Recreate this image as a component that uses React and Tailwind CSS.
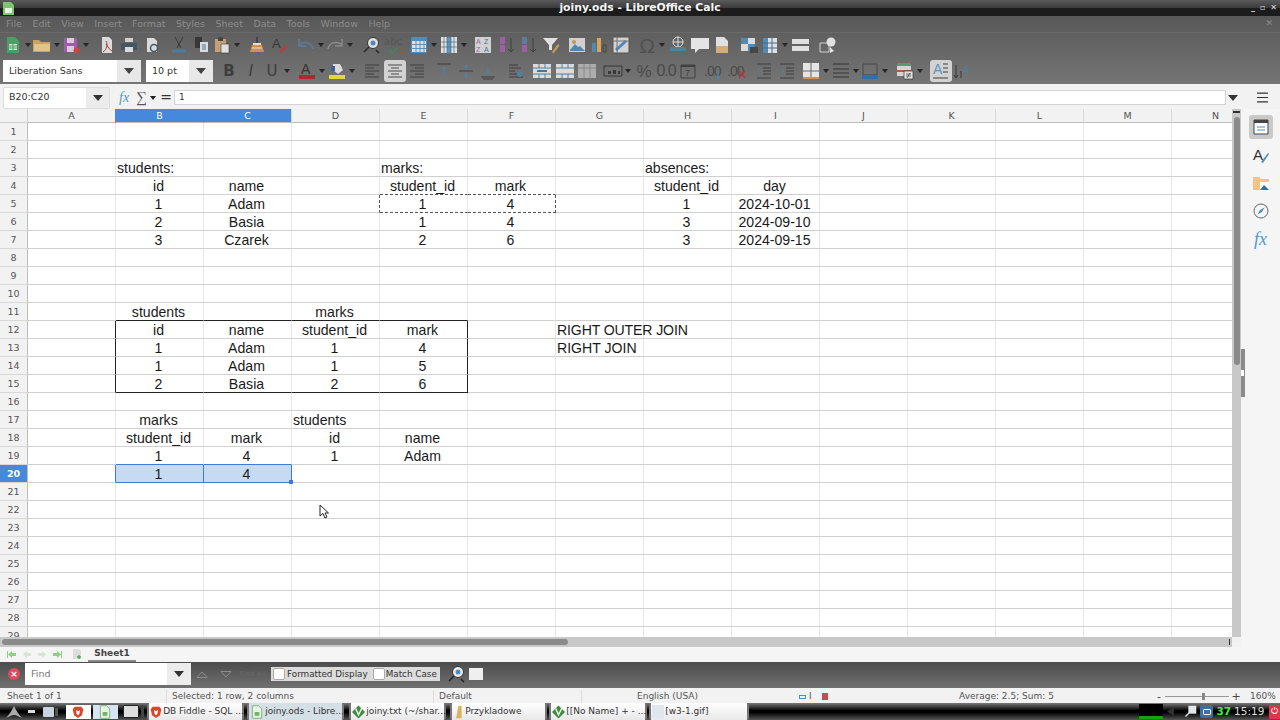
import { Menu as MenuIcon } from "lucide-react";

const colNames = ["A", "B", "C", "D", "E", "F", "G", "H", "I", "J", "K", "L", "M", "N"];
const rowNums = Array.from({ length: 29 }, (_, i) => i + 1);
const menus = ["File", "Edit", "View", "Insert", "Format", "Styles", "Sheet", "Data", "Tools", "Window", "Help"];

// cell contents, left = label overflowing to the right
const cells = {
  B3: { t: "students:", left: true }, E3: { t: "marks:", left: true }, H3: { t: "absences:", left: true },
  B4: { t: "id" }, C4: { t: "name" }, E4: { t: "student_id" }, F4: { t: "mark" }, H4: { t: "student_id" }, I4: { t: "day" },
  B5: { t: "1" }, C5: { t: "Adam" }, E5: { t: "1" }, F5: { t: "4" }, H5: { t: "1" }, I5: { t: "2024-10-01" },
  B6: { t: "2" }, C6: { t: "Basia" }, E6: { t: "1" }, F6: { t: "4" }, H6: { t: "3" }, I6: { t: "2024-09-10" },
  B7: { t: "3" }, C7: { t: "Czarek" }, E7: { t: "2" }, F7: { t: "6" }, H7: { t: "3" }, I7: { t: "2024-09-15" },
  B11: { t: "students" }, D11: { t: "marks" },
  B12: { t: "id" }, C12: { t: "name" }, D12: { t: "student_id" }, E12: { t: "mark" }, G12: { t: "RIGHT OUTER JOIN", left: true },
  B13: { t: "1" }, C13: { t: "Adam" }, D13: { t: "1" }, E13: { t: "4" }, G13: { t: "RIGHT JOIN", left: true },
  B14: { t: "1" }, C14: { t: "Adam" }, D14: { t: "1" }, E14: { t: "5" },
  B15: { t: "2" }, C15: { t: "Basia" }, D15: { t: "2" }, E15: { t: "6" },
  B17: { t: "marks" }, D17: { t: "students", left: true },
  B18: { t: "student_id" }, C18: { t: "mark" }, D18: { t: "id" }, E18: { t: "name" },
  B19: { t: "1" }, C19: { t: "4" }, D19: { t: "1" }, E19: { t: "Adam" },
  B20: { t: "1" }, C20: { t: "4" },
};

// borders and fills that differ from the plain grid
const extra = {
  E4: "!border-b-[#555] [border-bottom-style:dashed]",
  F4: "!border-b-[#555] [border-bottom-style:dashed]",
  D5: "!border-r-[#555] [border-right-style:dashed]",
  E5: "!border-b-[#555] [border-bottom-style:dashed]",
  F5: "!border-r-[#555] !border-b-[#555] border-dashed",
  B11: "!border-b-[#222]", C11: "!border-b-[#222]", D11: "!border-b-[#222]", E11: "!border-b-[#222]",
  G12: "tracking-[-0.13px]",
  A12: "!border-r-[#222]", A13: "!border-r-[#222]", A14: "!border-r-[#222]", A15: "!border-r-[#222]",
  E12: "!border-r-[#222]", E13: "!border-r-[#222]", E14: "!border-r-[#222]", E15: "!border-r-[#222] !border-b-[#222]",
  B15: "!border-b-[#222]", C15: "!border-b-[#222]", D15: "!border-b-[#222]",
  B19: "!border-b-[#3f7ccb]", C19: "!border-b-[#3f7ccb]", A20: "!border-r-[#3f7ccb]",
  B20: "bg-[#c6daf4] !border-r-[#3f7ccb] !border-b-[#3f7ccb]",
  C20: "bg-[#c6daf4] !border-r-[#3f7ccb] !border-b-[#3f7ccb]",
};

const S = ({ children, w = 18, h = 18, box = "0 0 18 18" }) => (
  <svg width={w} height={h} viewBox={box} fill="none" className="shrink-0">{children}</svg>
);

const I = ({ children, className = "" }) => (
  <div className={`flex h-[22px] w-[22px] shrink-0 items-center justify-center ${className}`}>{children}</div>
);

const Ar = ({ className = "" }) => (
  <div className={`flex w-[7px] shrink-0 justify-center ${className}`}>
    <svg width="6" height="4" viewBox="0 0 6 4"><path d="M0 0h6L3 4z" fill="#1f1f1f" /></svg>
  </div>
);

const ComboArrow = () => <svg width="10" height="6" viewBox="0 0 10 6"><path d="M0 0h10L5 6z" fill="#333" /></svg>;

const NewDoc = () => <S><path d="M3 1h8l4 4v12H3z" fill="#4aa564" /><path d="M5 8h8v6H5z" fill="#e8f3ea" /><path d="M5 10h8M5 12h8M9 8v6" stroke="#4aa564" /></S>;
const Folder = () => <S w={20} box="0 0 20 18"><path d="M1 4h6l2 2h9v10H1z" fill="#d8a85f" /><path d="M2 8h16v7H2z" fill="#f0cf8f" /></S>;
const Save = () => <S><path d="M2 2h13v14H2z" fill="#a55fae" /><path d="M5 2h7v5H5zM5 10h7v6H5z" fill="#e9d4ea" /><circle cx="14.5" cy="14.5" r="3" fill="#d8433f" /></S>;
const Pdf = () => <S><path d="M4 1h7l3 3v13H4z" fill="#e8e8e8" /><path d="M8 5c2 4 1 8-3 11M8 8c2 3 4 6 6 7" stroke="#a33" /></S>;
const Printer = () => <S><path d="M5 2h8v4H5z" fill="#ddd" /><path d="M1 7h16v7H1z" fill="#3f5663" /><path d="M5 11h8v5H5z" fill="#e8e8e8" /></S>;
const Preview = () => <S><path d="M4 2h7l3 3v11H4z" fill="#e8e8e8" /><circle cx="11" cy="12" r="3.5" stroke="#456" strokeWidth="1.5" /></S>;
const Cut = () => <S><path d="M5 1l6 11M13 1L7 12" stroke="#333" /><path d="M2 15h14" stroke="#4b7fa5" strokeWidth="3" /></S>;
const Copy = () => <S><path d="M3 1h7v11H3z" fill="#333" /><path d="M8 6h8v10H8z" fill="#e8e8e8" /><path d="M10 9h4M10 11h4M10 13h4" stroke="#4b7fa5" /></S>;
const Paste = () => <S><path d="M2 3h11v13H2z" fill="#cfa877" /><path d="M5 1h5v4H5z" fill="#444" /><path d="M8 8h8v9H8z" fill="#eee" stroke="#333" strokeWidth=".6" /></S>;
const Clone = () => <S><path d="M8 1h2v6H8z" fill="#444" /><path d="M5 7h8v2H5z" fill="#eee" /><path d="M4 9h10l2 7H2z" fill="#d9974e" /><path d="M4 12h10" stroke="#eee" /></S>;
const Clear = () => <S><text x="2" y="12" fontSize="13" fill="#333" fontFamily="Liberation Sans">A</text><path d="M9 15l6-6 2 2-6 6z" fill="#c23a3a" /></S>;
const Undo = () => <S><path d="M16 13C15 7 9 5 3 8" stroke="#5b7c99" strokeWidth="2" /><path d="M2 3v7h7" stroke="#5b7c99" strokeWidth="2" /></S>;
const Redo = () => <S><path d="M2 13C3 7 9 5 15 8" stroke="#909090" strokeWidth="1.5" /><path d="M16 3v7H9" stroke="#909090" strokeWidth="1.5" /></S>;
const Find = () => <S><circle cx="11" cy="7" r="5.5" fill="#eee" stroke="#333" /><circle cx="11" cy="7" r="2.5" fill="#4b8ec4" /><path d="M7 11l-5 5M14 14l3 3" stroke="#222" strokeWidth="1.5" /></S>;
const Spell = () => <S w={20} box="0 0 20 18"><text x="1" y="9" fontSize="10" fill="#555" fontFamily="DejaVu Sans">abc</text><path d="M6 14l3 3 6-5" stroke="#3f8a5a" strokeWidth="1.5" /></S>;
const Table = () => <S><path d="M1 1h16v16H1z" fill="#4f8fc0" /><path d="M2 5h14v11H2z" fill="#eee" /><path d="M6 1v16M10 1v16M14 1v16M1 8.500h16M1 12.500h16" stroke="#6a94b4" /></S>;
const Grid2 = () => <S><path d="M1 1h16v16H1z" fill="#eee" /><path d="M7 1h4v16H7z" fill="#5b9bcc" /><path d="M1 6h16M1 11h16M4 1v16M7 1v16M11 1v16M14 1v16" stroke="#4a6f8a" strokeWidth=".7" /></S>;
const SortAZ = () => <S><path d="M1 1h16v16H1z" fill="#ddd" /><text x="2" y="8" fontSize="7" fill="#a55fae" fontFamily="Liberation Sans">A</text><text x="10" y="8" fontSize="7" fill="#3f78a5" fontFamily="Liberation Sans">Z</text><text x="2" y="16" fontSize="7" fill="#a55fae" fontFamily="Liberation Sans">Z</text><text x="10" y="16" fontSize="7" fill="#3f78a5" fontFamily="Liberation Sans">A</text></S>;
const SortDir = ({ a, b }) => <S><path d={"M3 1h5v7H3z"} fill={a} /><path d="M3 9h5v7H3z" fill={b} /><path d="M14 2v14M11 13l3 3 3-3" stroke="#3a3a3a" /></S>;
const Filter = () => <S><path d="M1 2h15L10 9v5H7V9z" fill="#eee" /><path d="M10 16l6-8 1.500 1.500-6 8z" fill="#d9a14e" /></S>;
const Picture = () => <S><path d="M1 2h16v14H1z" fill="#ddd" /><path d="M2 14l5-6 3 3 2-1 5 5H2z" fill="#4d8cc0" /><circle cx="6" cy="6" r="2" fill="#d9974e" /></S>;
const Chart = () => <S><path d="M2 7h4v9H2z" fill="#4d8cc0" /><path d="M7 2h4v14H7z" fill="#e6ac50" /><path d="M13 9h3v7h-3z" stroke="#444" /></S>;
const Pivot = () => <S><path d="M1 1h16v16H1z" fill="#ddd" stroke="#555" /><path d="M4 14L14 5" stroke="#4d8cc0" strokeWidth="3" /><path d="M1 5h16M5 1v16" stroke="#777" /></S>;
const Omega = () => <span className="font-['Liberation_Sans',sans-serif] text-[21px] leading-none text-[#505050]">Ω</span>;
const LinkIcon = () => <S><circle cx="9" cy="6" r="5" stroke="#eee" /><path d="M4 6h10M9 1v10" stroke="#eee" /><path d="M1 11h16v4H1z" fill="#4f83a5" /></S>;
const Comment = () => <S w={20} box="0 0 20 18"><path d="M1 2h18v11H9l-4 4v-4H1z" fill="#f2f2f2" /></S>;
const Note = () => <S><path d="M3 1h8l4 4v12H3z" fill="#eee" /><path d="M3 10h12v7H3z" fill="#e0b478" /></S>;
const Header = () => <S w={20} box="0 0 20 18"><path d="M2 2h14v13H2z" fill="#e8e8e8" /><path d="M2 2h7v6H2zM9 8h7v7H9z" fill="#4f8fc0" /><path d="M11 11h8v6h-8z" fill="#444" /></S>;
const Col = () => <S><path d="M2 2h14v15H2z" fill="#eee" /><path d="M2 2h5v15H2z" fill="#4f8fc0" /><path d="M2 7h14M2 12h14M11 2v15" stroke="#3f6f95" /></S>;
const Split = () => <S w={20} box="0 0 20 18"><path d="M1 3h17v5H1zM1 10h17v5H1z" fill="#eee" /></S>;
const Shapes = () => <S w={20} box="0 0 20 18"><path d="M2 7h9v9H2z" stroke="#ddd" /><circle cx="13" cy="6" r="4.500" fill="#eee" /><path d="M12 11l4 4-4 2z" fill="#eee" /></S>;

const Letter = ({ c, cls }) => <span className={`font-['DejaVu_Sans',sans-serif] text-[15px] leading-none text-[#3d3d3d] ${cls}`}>{c}</span>;
const FontColor = () => <S box="0 0 18 18"><text x="3" y="12" fontSize="14" fill="#2e2e2e" fontFamily="Liberation Sans">A</text><path d="M1 13h16v4H1z" fill="#b8202c" /></S>;
const Highlight = () => <S><path d="M5 2l7 0 3 6-5 4-5-4z" fill="#e8e8e8" /><path d="M3 4h4v5H3z" fill="#2f66a8" /><path d="M1 13h16v4H1z" fill="#efe23a" /></S>;
const Lines = ({ ds }) => <S>{ds.map((d, i) => <path key={i} d={d} stroke="#3d3d3d" />)}</S>;
const VAlign = ({ y }) => <S><path d={y === 0 ? "M2 2h14" : y === 1 ? "M2 9h14" : "M2 15h14"} stroke="#3a3a3a" /><path d={y === 0 ? "M7 5h4l-2 5z" : y === 1 ? "M7 3h4L9 8zM7 15h4l-2-5z" : "M7 12h4L9 6z"} fill="#4f83a5" /><path d={y === 2 ? "M4 17h10" : "M9 10v5"} stroke={y === 2 ? "#3a3a3a" : "#4f83a5"} /></S>;
const WrapBars = () => <S><path d="M2 3h9M2 6h12M2 9h6M2 12h9M2 15h14" stroke="#3a3a3a" /><circle cx="13" cy="12" r="3" fill="#4f83a5" /></S>;
const Merge = ({ mid }) => <S w={20} box="0 0 20 18"><path d="M1 2h18v14H1z" fill="#e8e8e8" /><path d="M1 6h18M1 12h18M7 2v4M13 2v4M7 12v4M13 12v4" stroke="#4f83a5" /><path d={mid ? "M5 9h10" : "M1 9h0"} stroke="#3f78a5" strokeWidth="2" /></S>;
const MergeOff = () => <S w={20} box="0 0 20 18"><path d="M1 2h18v14H1z" fill="#b5b5b5" /><path d="M1 6h18M7 2v14M13 2v14" stroke="#8a8a8a" /></S>;
const Fmt = () => <S w={20} box="0 0 20 18"><path d="M1 4h18v10H1z" stroke="#333" /><path d="M5 9h3v3H5zM10 8h3v4h-3zM15 9h2v3h-2z" fill="#333" /></S>;
const DateI = () => <S><path d="M2 3h14v13H2z" stroke="#3d3d3d" /><path d="M2 3h14v2H2z" fill="#3d3d3d" /><text x="6" y="14" fontSize="9" fill="#3d3d3d" fontFamily="Liberation Sans">7</text></S>;
const DecAdd = ({ red }) => (
  <S w={22} box="0 0 22 18">
    <text x="1" y="14" fontSize="14" fill="#474747" fontFamily="Liberation Sans" letterSpacing="-1">.00</text>
    {red
      ? <path d="M13 9l6 7M19 9l-6 7" stroke="#b8303a" strokeWidth="1.5" />
      : <path d="M15 9v7M13 14l2 2 2-2" stroke="#4f83a5" strokeWidth="1.5" />}
  </S>
);
const Indent = () => <S><path d="M2 2h14M8 6h8M8 9h8M8 12h8M2 16h14" stroke="#3a3a3a" /><path d="M2 9h4M4 7l2 2-2 2" stroke="#4f83a5" /></S>;
const Borders = () => <S><path d="M1 1h16v16H1z" fill="#f2f2f2" /><path d="M9 1v16M1 9h16" stroke="#666" /><path d="M1 16h16" stroke="#d9974e" strokeWidth="2" /></S>;
const BorderStyle = () => <S><path d="M1 2h16M1 7h16M1 11h16M1 15h16" stroke="#2e2e2e" /></S>;
const BorderColor = () => <S><path d="M2 2h14v11H2z" stroke="#444" /><path d="M1 13h16v4H1z" fill="#2a6fb0" /></S>;
const Cond = () => <S><path d="M1 1h14v13H1z" fill="#e0e0e0" /><path d="M1 1h14v3H1z" fill="#4aa564" /><path d="M1 8h14v2H1z" fill="#c0574f" /><path d="M8 9h9v8H8z" fill="#eee" stroke="#333" strokeWidth=".7" /><path d="M10 12h5M10 14h5M11 16l3-5" stroke="#333" strokeWidth=".7" /></S>;
const WrapA = () => <S><text x="1" y="12" fontSize="14" fill="#4f8fc0" fontFamily="Liberation Sans">A</text><path d="M11 2h5M11 6h5M11 10h5M1 16h15" stroke="#333" /></S>;
const VertText = () => <S><path d="M3 3v13M1 13l2 3 2-3M8 9v7" stroke="#333" /><text x="9" y="12" fontSize="11" fill="#4f83a5" fontFamily="Liberation Sans">A</text></S>;

const Deck = ({ children, active }) => (
  <div className={`flex h-[24px] w-[24px] items-center justify-center rounded-[3px] ${active ? "bg-[#c9c9c9]" : ""}`}>{children}</div>
);

const Task = ({ icon, text, active, className = "" }) => (
  <div className={`flex h-[17px] shrink-0 items-center gap-[1px] whitespace-nowrap rounded-[2px] border-x-2 border-[#777] px-[1px] text-[9px] text-[#333] ${active ? "bg-[#d4dfe6]" : "bg-gradient-to-b from-[#fff] to-[#e8e8e8]"} ${className}`}>
    {icon}
    <span>{text}</span>
  </div>
);

const Brave = ({ s = 12 }) => <S w={s} h={s} box="0 0 18 18"><path d="M4 1h10l3 4-2 9-6 4-6-4-2-9z" fill="#d9472b" /><path d="M6 6l3 2 3-2-1 6-2 2-2-2z" fill="#fff" /></S>;
const Doc = () => <S w={14} h={14} box="0 0 18 18"><path d="M3 1h8l4 4v12H3z" fill="#e9f3e6" stroke="#6aa864" /><path d="M6 9h6v5H6z" fill="#6fb766" /></S>;
const Vim = () => <S w={13} h={14} box="0 0 18 18"><path d="M9 0l9 9-9 9-9-9z" fill="#3c8c3c" /><path d="M5 4l4 9 5-10" stroke="#eee" strokeWidth="2" /></S>;

const TabNav = ({ d, c }) => <svg width="9" height="7" viewBox="0 0 9 7"><path d={d} fill={c} /></svg>;

export default function App() {
  return (
    <div className="flex h-[720px] w-[1280px] flex-col overflow-hidden bg-[#f2f2f2] font-['DejaVu_Sans',sans-serif]">
      {/* title bar */}
      <div className="relative flex h-[16px] shrink-0 items-center justify-center bg-[linear-gradient(#5a5a5a,#3a3a3a_50%,#1c1c1c_50%,#1c1c1c)] text-[10.8px] font-bold text-[#f4f4f4]">
        <div className="absolute left-[3px] top-[2px]">
          <S w={11} h={13} box="0 0 11 13"><path d="M0 0h8l3 3v10H0z" fill="#7cc46e" /><path d="M2 6h7v5H2z" fill="#e8f5e4" /></S>
        </div>
        joiny.ods - LibreOffice Calc
        <div className="absolute right-[3px] top-[2px] flex items-center gap-[5px] text-[8px] leading-[12px] text-[#ddd]">
          <span>_</span><span>▫</span><span>✕</span>
        </div>
      </div>

      {/* menu + toolbars */}
      <div className="h-[68px] shrink-0 bg-gradient-to-b from-[#585858] to-[#757575] [&_svg]:opacity-90">
        <div className="flex h-[17px] items-center justify-between border-b border-[#6a6a6a] pl-[6px] pr-[7px] text-[9.5px] text-[#8b8b8b]">
          <div className="flex gap-[10.5px]">
            {menus.map((m) => <span key={m}>{m}</span>)}
          </div>
          <span className="text-[9px]">✕</span>
        </div>
        <div className="flex h-[24px] items-center pl-[2px]">
          <I><NewDoc /></I><Ar /><I><Folder /></I><Ar /><I><Save /></I><Ar />
          <I className="ml-[7px]"><Pdf /></I><I><Printer /></I><I className="ml-[1px]"><Preview /></I>
          <I className="ml-[5px]"><Cut /></I><I><Copy /></I><I className="-ml-[1px]"><Paste /></I><Ar />
          <I className="ml-[6px]"><Clone /></I><I><Clear /></I>
          <I className="ml-[5px]"><Undo /></I><Ar /><I><Redo /></I><Ar />
          <I className="ml-[7px]"><Find /></I><I><Spell /></I>
          <I className="ml-[4px]"><Table /></I><Ar /><I className="ml-[1px]"><Grid2 /></I><Ar />
          <I className="ml-[5px]"><SortAZ /></I><I className="ml-[1px]"><SortDir a="#a55fae" b="#a55fae" /></I><I><SortDir a="#5c7fa5" b="#a55fae" /></I><I className="ml-[1px]"><Filter /></I>
          <I className="ml-[4px]"><Picture /></I><I><Chart /></I><I><Pivot /></I>
          <I className="ml-[4px]"><Omega /></I><Ar />
          <I className="ml-[2px]"><LinkIcon /></I><I><Comment /></I><I><Note /></I>
          <I className="ml-[5px]"><Header /></I><I className="-ml-[1px]"><Col /></I><Ar />
          <I className="ml-[2px]"><Split /></I><I className="ml-[5px]"><Shapes /></I>
        </div>
        <div className="flex h-[27px] items-center pl-[3px] pt-[1px]">
          <div className="flex h-[22px] w-[138px] shrink-0 items-center bg-white text-[9.5px] text-[#333]">
            <span className="flex-1 pl-[6px]">Liberation Sans</span>
            <div className="flex h-full w-[24px] items-center justify-center bg-[#e8e8e8]"><ComboArrow /></div>
          </div>
          <div className="ml-[5px] flex h-[22px] w-[67px] shrink-0 items-center bg-white text-[9.5px] text-[#333]">
            <span className="flex-1 pl-[6px]">10 pt</span>
            <div className="flex h-full w-[24px] items-center justify-center bg-[#e8e8e8]"><ComboArrow /></div>
          </div>
          <I className="ml-[5px]"><Letter c="B" cls="font-bold" /></I><I><Letter c="I" cls="italic" /></I><I className="-ml-[1px]"><Letter c="U" /></I><Ar />
          <I className="ml-[6px]"><FontColor /></I><Ar /><I className="ml-[1px]"><Highlight /></I><Ar />
          <I className="ml-[6px]"><Lines ds={["M2 3h14", "M2 6h9", "M2 9h14", "M2 12h9", "M2 15h14"]} /></I>
          <I className="ml-[1px] rounded-[3px] bg-[#d2d2d2]"><Lines ds={["M2 3h14", "M5 6h8", "M2 9h14", "M5 12h8", "M2 15h14"]} /></I>
          <I><Lines ds={["M2 3h14", "M7 6h9", "M2 9h14", "M7 12h9", "M2 15h14"]} /></I>
          <I className="ml-[5px]"><VAlign y={0} /></I><I><VAlign y={1} /></I><I><VAlign y={2} /></I>
          <I className="ml-[6px]"><WrapBars /></I>
          <I className="ml-[4px]"><Merge mid /></I><I className="ml-[1px]"><Merge /></I><I><MergeOff /></I>
          <I className="ml-[4px]"><Fmt /></I><Ar />
          <I className="ml-[2px]"><span className="font-['Liberation_Sans',sans-serif] text-[17px] leading-none text-[#4a4a4a]">%</span></I>
          <I><span className="font-['Liberation_Sans',sans-serif] text-[16px] leading-none tracking-[-1px] text-[#4a4a4a]">0.0</span></I>
          <I><DateI /></I>
          <I className="ml-[4px]"><DecAdd /></I><I className="ml-[1px]"><DecAdd red /></I>
          <I className="ml-[5px]"><Indent /></I><I className="ml-[1px]"><Indent /></I>
          <I className="ml-[2px]"><Borders /></I><Ar /><I className="ml-[1px]"><BorderStyle /></I><Ar /><I><BorderColor /></I><Ar />
          <I className="ml-[6px]"><Cond /></I><Ar />
          <I className="ml-[7px] rounded-[3px] bg-[#d2d2d2]"><WrapA /></I><I className="-ml-[1px]"><VertText /></I>
        </div>
      </div>

      {/* formula bar */}
      <div className="flex h-[25px] shrink-0 items-center pl-[3px] pt-[2px] text-[9.5px] text-[#333]">
        <div className="flex h-[22px] w-[107px] shrink-0 items-center rounded-[2px] border border-[#ddd] bg-white">
          <span className="flex-1 pl-[5px]">B20:C20</span>
          <div className="flex h-full w-[23px] items-center justify-center bg-[#ececec]"><ComboArrow /></div>
        </div>
        <span className="ml-[9px] w-[14px] font-['Liberation_Serif',serif] text-[14px] italic text-[#4f9bc9]">fx</span>
        <span className="ml-[3px] w-[12px] font-['Liberation_Serif',serif] text-[15px] text-[#555]">∑</span>
        <Ar className="ml-[1px]" />
        <span className="ml-[4px] w-[12px] text-center text-[14px] text-[#333]">=</span>
        <div className="ml-[2px] flex h-[15px] w-[1052px] shrink-0 items-center border border-[#d4d4d4] bg-white pl-[4px] text-[9px]">1</div>
        <div className="flex w-[14px] shrink-0 justify-center"><ComboArrow /></div>
        <div className="ml-[7px] flex w-[30px] shrink-0 justify-center"><MenuIcon size={15} strokeWidth={1.8} color="#333" /></div>
      </div>

      {/* sheet area + deck */}
      <div className="flex h-[553px] shrink-0">
        <div className="flex w-[1241px] flex-col">
          <div className="flex h-[528px]">
            <div className="relative w-[1232px] overflow-hidden bg-white">
              <div className="grid grid-cols-[28px_repeat(14,88px)] grid-rows-[14px_repeat(29,18px)]">
                <div className="border-b border-r border-[#cfcfcf] bg-[#f2f2f2]" />
                {colNames.map((c) => (
                  <div
                    key={c}
                    className={`flex items-center justify-center border-b border-r border-b-[#bdbdbd] pt-[1px] text-[9.5px] ${c === "A" || c === "B" ? "border-r-[#4489dc]" : "border-r-[#d8d8d8]"} ${c === "B" || c === "C" ? "bg-[#4489dc] text-white" : "bg-[#f2f2f2] text-[#555]"}`}
                  >
                    {c}
                  </div>
                ))}
                {rowNums.flatMap((r) => [
                  <div
                    key={`r${r}`}
                    className={`flex items-center justify-center border-b border-r border-b-[#d8d8d8] border-r-[#bdbdbd] pt-[1px] text-[9.5px] ${r === 20 ? "bg-[#4489dc] font-bold text-white" : "bg-[#f2f2f2] text-[#555]"}`}
                  >
                    {r}
                  </div>,
                  ...colNames.map((c) => {
                    const id = c + r;
                    const cell = cells[id];
                    return (
                      <div
                        key={id}
                        className={`flex items-center whitespace-nowrap border-b border-r border-b-[#d0d0d0] border-r-[#e6e6e6] pt-[1px] font-['Liberation_Sans',sans-serif] text-[14.1px] leading-none text-[#1a1a1a] ${cell && cell.left ? "justify-start pl-[1px]" : "justify-center pr-[2px]"} ${extra[id] || ""}`}
                      >
                        {cell ? cell.t : null}
                      </div>
                    );
                  }),
                ])}
              </div>
              {/* fill handle and mouse pointer */}
              <div className="absolute left-[289px] top-[371px] h-[4px] w-[4px] bg-[#3f7ccb]" />
              <svg className="absolute left-[319px] top-[395px]" width="10" height="15" viewBox="0 0 10 15">
                <path d="M1 1v11l3-2.500 2 4.500 2-1-2-4h3.500z" fill="#fff" stroke="#222" strokeWidth="1" />
              </svg>
            </div>
            <div className="flex w-[9px] flex-col items-center bg-[#c8c8c8]">
              <div className="mt-[2px] h-[2px] w-[7px] bg-[#333]" />
              <div className="mt-[4px] h-[248px] w-[6px] rounded-[3px] bg-[#8b8b8b]" />
            </div>
          </div>
          <div className="flex h-[10px] w-[1232px] items-center justify-between bg-[#c8c8c8] pl-[2px] pr-[2px]">
            <div className="h-[6px] w-[566px] rounded-[3px] bg-[#8b8b8b]" />
            <div className="h-[6px] w-[1px] bg-[#333]" />
          </div>
          <div className="flex h-[15px] items-center bg-[#f5f5f5] pl-[7px]">
            <div className="flex w-[55px] items-center justify-between">
              <TabNav d="M0 0h1v7H0zM1 3.500L5 0v2h4v3H5v2z" c="#8fce86" />
              <TabNav d="M1 3.500L5 0v2h4v3H5v2z" c="#d5e6d0" />
              <TabNav d="M8 3.500L4 0v2H0v3h4v2z" c="#d5e6d0" />
              <TabNav d="M9 0H8v7h1zM8 3.500L4 0v2H0v3h4v2z" c="#8fce86" />
            </div>
            <div className="ml-[10px]"><S w={10} h={11} box="0 0 10 11"><path d="M1 0h6l2 2v8H1z" fill="#ddd" /><path d="M5 8h4M7 6v4" stroke="#5aa85a" strokeWidth="1.500" /></S></div>
            <div className="ml-[6px] flex h-full w-[48px] items-center justify-center border-b-2 border-[#888] pt-[1px] text-[9px] font-bold text-[#444]">Sheet1</div>
          </div>
        </div>
        <div className="relative flex w-[39px] flex-col items-center gap-[4px] bg-[#f5f5f5] pt-[6px]">
          <div className="absolute left-0 top-[240px] flex h-[48px] w-[4px] items-center bg-[#8b8b8b]">
            <div className="h-[6px] w-[3px] bg-white" />
          </div>
          <Deck active>
            <S><path d="M2 2h14v14H2z" fill="#fff" stroke="#444" /><path d="M2 2h14v3H2z" fill="#444" /><path d="M5 9h8M5 12h8" stroke="#4f8fc0" /></S>
          </Deck>
          <Deck>
            <S><text x="1" y="14" fontSize="15" fill="#333" fontFamily="Liberation Sans">A</text><path d="M9 16l7-9 1 1-6 9z" fill="#4f8fc0" /></S>
          </Deck>
          <Deck>
            <S><path d="M1 3h6l2 2h8v11H1z" fill="#f0c688" /><path d="M8 8h9v9H8z" fill="#fff" /><path d="M8 16l4-5 5 5z" fill="#2f6fa8" /></S>
          </Deck>
          <Deck>
            <S><circle cx="9" cy="9" r="7" stroke="#666" /><path d="M12.500 5.500L10 10l-4.500 2.500L8 8z" fill="#4f8fc0" /></S>
          </Deck>
          <Deck>
            <span className="font-['Liberation_Serif',serif] text-[18px] italic leading-none text-[#4f9bc9]">fx</span>
          </Deck>
        </div>
      </div>

      {/* find bar */}
      <div className="flex h-[26px] shrink-0 items-center bg-gradient-to-b from-[#4c4c4c] to-[#717171] pb-[2px] pl-[8px]">
        <div className="flex h-[12px] w-[12px] items-center justify-center rounded-full bg-[#e2495c] text-[9px] font-bold leading-none text-white">×</div>
        <div className="ml-[5px] flex h-[22px] w-[166px] shrink-0 items-center bg-white text-[9.5px] text-[#777]">
          <span className="flex-1 pl-[6px]">Find</span>
          <div className="flex h-full w-[24px] items-center justify-center bg-[#ececec]"><ComboArrow /></div>
        </div>
        <div className="ml-[5px] flex w-[36px] shrink-0 justify-between">
          <svg width="12" height="7" viewBox="0 0 12 7"><path d="M1 6.500h10L6 1z" stroke="#8c8c8c" fill="none" /></svg>
          <svg width="12" height="7" viewBox="0 0 12 7"><path d="M1 .5h10L6 6z" stroke="#8c8c8c" fill="none" /></svg>
        </div>
        <span className="ml-[8px] w-[31px] shrink-0 whitespace-nowrap text-[7px] text-[#696969]">Find All</span>
        <div className="flex h-[14px] w-[169px] shrink-0 items-center bg-[#dcdcdc] pl-[2px] text-[8.8px] leading-none text-[#333]">
          <span className="h-[12px] w-[12px] shrink-0 rounded-[2px] border border-[#aaa] bg-white" />
          <span className="ml-[2px]">Formatted Display</span>
          <span className="ml-[5px] h-[12px] w-[12px] shrink-0 rounded-[2px] border border-[#aaa] bg-white" />
          <span className="ml-[1px]">Match Case</span>
        </div>
        <div className="ml-[7px]"><Find /></div>
        <div className="ml-[4px] h-[12px] w-[14px] bg-[#efefef]" />
      </div>

      {/* status bar */}
      <div className="flex h-[15px] shrink-0 items-center bg-[#f2f2f2] pt-[2px] text-[9px] text-[#555]">
        <span className="w-[166px] shrink-0 pl-[7px]">Sheet 1 of 1</span>
        <span className="w-[267px] shrink-0 border-l border-[#ddd] pl-[5px]">Selected: 1 row, 2 columns</span>
        <span className="w-[148px] shrink-0 border-l border-[#ddd] pl-[5px]">Default</span>
        <span className="w-[217px] shrink-0 border-l border-[#ddd] pl-[55px]">English (USA)</span>
        <div className="flex w-[47px] shrink-0 items-center gap-[3px] pl-[1px]">
          <span className="h-[4px] w-[7px] border border-[#4f8fc0]" />
          <span className="leading-none">I</span>
          <span className="ml-[7px] h-[7px] w-[6px] bg-[#c84a55]" />
        </div>
        <span className="w-[310px] shrink-0 pl-[114px]">Average: 2.5; Sum: 5</span>
        <div className="flex w-[86px] shrink-0 items-center text-[11px] leading-none text-[#444]">
          <span className="w-[8px] text-center">-</span>
          <div className="relative ml-[2px] h-[1px] w-[64px] bg-[#999]">
            <span className="absolute left-[37px] top-[-3px] h-[7px] w-[3px] bg-[#888]" />
          </div>
          <span className="ml-[2px] w-[10px] text-center">+</span>
        </div>
        <span className="pl-[9px]">160%</span>
      </div>

      {/* task bar */}
      <div className="flex h-[17px] shrink-0 items-center bg-[linear-gradient(#7a7a7a,#000_45%,#000_55%,#555)] pl-[6px] font-['DejaVu_Sans',sans-serif]">
        <S w={16} h={14} box="0 0 16 14"><path d="M8 1C6 5 3 10 0 13c3-1 5-3 8-3s5 2 8 3C13 10 10 5 8 1z" fill="#a9a9a9" /></S>
        <div className="ml-[6px] h-[3px] w-[7px] bg-[#ddd]" />
        <div className="ml-[8px] h-[10px] w-[12px] rounded-[1px] bg-[#c8d4e0]" />
        <div className="ml-[1px] h-[8px] w-[3px] bg-[#555]" />
        <div className="ml-[8px] flex h-[14px] w-[25px] items-center justify-center bg-white"><Brave /></div>
        <div className="ml-[2px] flex h-[14px] w-[26px] items-center justify-center bg-[#d4e4f2]"><Doc /></div>
        <div className="ml-[5px] h-[13px] w-[17px] rounded-[1px] border border-[#222] bg-[#ddd]" />
        <div className="ml-[2px] h-[13px] w-[3px] bg-[#444]" />
        <Task className="ml-[3px] w-[97px]" icon={<Brave s={12} />} text="DB Fiddle - SQL ..." />
        <Task active className="ml-[3px] w-[97px]" icon={<Doc />} text="joiny.ods - Libre..." />
        <Task className="ml-[5px] w-[97px]" icon={<Vim />} text="joiny.txt (~/shar..." />
        <Task className="ml-[4px] w-[97px]" icon={<S w={11} h={14} box="0 0 14 18"><path d="M7 1h4v16H4z" fill="#dcb35c" /></S>} text="Przykladowe" />
        <Task className="ml-[2px] w-[98px]" icon={<Vim />} text="[[No Name] + - ..." />
        <Task className="ml-[2px] w-[100px]" icon={<div className="h-[13px] w-[12px] shrink-0 bg-[#dfe6ee]" />} text="[w3-1.gif]" />
        <div className="ml-[390px] flex h-[15px] w-[24px] shrink-0 items-end bg-black">
          <div className="h-[3px] w-full bg-[#1f9a1f]" />
        </div>
        <svg className="ml-[4px]" width="7" height="9" viewBox="0 0 7 9"><path d="M7 0v9L0 4.500z" fill="#333" /></svg>
        <div className="ml-[10px]"><S w={13} h={13} box="0 0 18 18"><path d="M6 1h11v11H6z" fill="#e0e6ea" /><path d="M7 11l-5 5" stroke="#ddd" strokeWidth="2" /></S></div>
        <div className="ml-[3px] flex h-[13px] w-[14px] items-center justify-center rounded-[2px] bg-[#3a6fa8]"><div className="h-[6px] w-[8px] rounded-[1px] border border-white" /></div>
        <span className="ml-[3px] text-[10.5px] font-bold text-[#3cf03c]">37</span>
        <span className="ml-[3px] text-[10.5px] text-[#ddd]">15:19</span>
        <div className="ml-[5px] flex h-[14px] w-[11px] items-center justify-center bg-[#d9384a] text-[9px] leading-none text-white">⏻</div>
      </div>
    </div>
  );
}
